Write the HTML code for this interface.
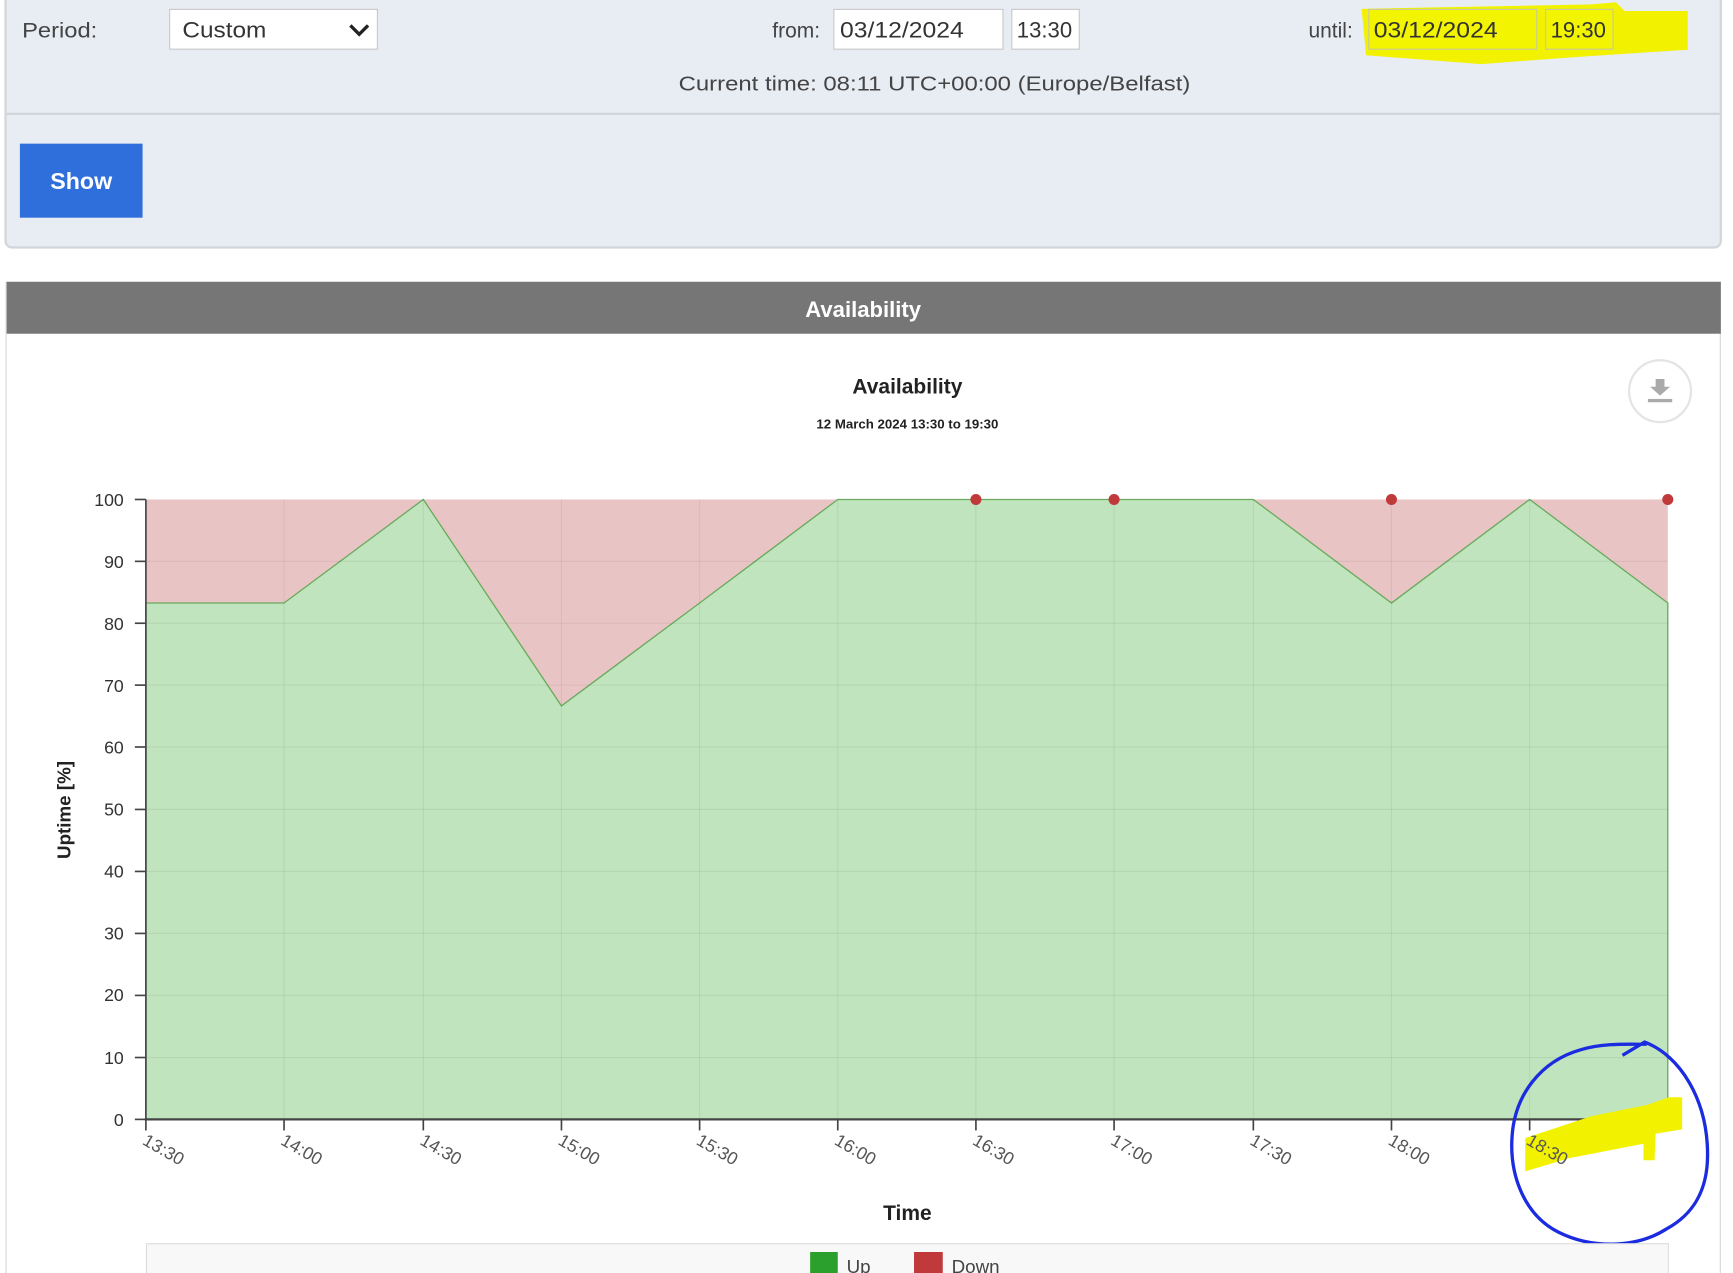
<!DOCTYPE html>
<html><head><meta charset="utf-8"><style>html,body{margin:0;padding:0;background:#fff;overflow:hidden}svg{display:block}text{font-family:"Liberation Sans",sans-serif}</style></head>
<body>
<svg width="1733" height="1273" viewBox="0 0 1568 1152" preserveAspectRatio="none" xmlns="http://www.w3.org/2000/svg">
<rect x="0" y="0" width="1568" height="1152" fill="#fff"/>
<rect x="5" y="-5" width="1552" height="229" rx="6" fill="#e8ecf3" stroke="#d2d5da" stroke-width="2"/>
<line x1="6" y1="103" x2="1556" y2="103" stroke="#d0d3d8" stroke-width="2"/>
<text x="20" y="34" font-size="19" fill="#444" textLength="68" lengthAdjust="spacingAndGlyphs">Period:</text>
<rect x="153.5" y="8.5" width="188" height="36" fill="#fff" stroke="#c8c8c8"/>
<text x="165" y="34" font-size="20" fill="#333" textLength="76" lengthAdjust="spacingAndGlyphs">Custom</text>
<path d="M317 23 L325 31 L333 23" fill="none" stroke="#222" stroke-width="3"/>
<text x="742" y="34" font-size="19" fill="#444" text-anchor="end">from:</text>
<rect x="754.5" y="8.5" width="153" height="36" fill="#fff" stroke="#c8c8c8"/>
<text x="760" y="34" font-size="20" fill="#333" textLength="112" lengthAdjust="spacingAndGlyphs">03/12/2024</text>
<rect x="915.5" y="8.5" width="61" height="36" fill="#fff" stroke="#c8c8c8"/>
<text x="920" y="34" font-size="20" fill="#333">13:30</text>
<text x="1224" y="34" font-size="19" fill="#444" text-anchor="end">until:</text>
<path d="M1232 8 L1440 4 L1462 2 L1470 10 L1527 10 L1527 45 L1420 52 L1340 58 L1236 50 Z" fill="#f2f200"/>
<rect x="1238.5" y="8.5" width="152" height="36" fill="#f3f500" stroke="#c8c8a0"/>
<text x="1243" y="34" font-size="20" fill="#333" textLength="112" lengthAdjust="spacingAndGlyphs">03/12/2024</text>
<rect x="1398.5" y="8.5" width="61" height="36" fill="#f3f500" stroke="#c8c8a0"/>
<text x="1403" y="34" font-size="20" fill="#333">19:30</text>
<text x="614" y="82" font-size="18" fill="#444" textLength="463" lengthAdjust="spacingAndGlyphs">Current time:  08:11 UTC+00:00 (Europe/Belfast)</text>
<rect x="18" y="130" width="111" height="67" fill="#2f6fdc"/>
<text x="73.5" y="171" font-size="21" font-weight="bold" fill="#fff" text-anchor="middle">Show</text>
<rect x="5.5" y="255.5" width="1551" height="900" fill="#fff" stroke="#d6d6d6"/>
<rect x="6" y="255" width="1551" height="47" fill="#767676"/>
<text x="781" y="287" font-size="20" font-weight="bold" fill="#fff" text-anchor="middle">Availability</text>
<text x="821" y="356" font-size="19" font-weight="bold" fill="#222" text-anchor="middle">Availability</text>
<text x="821" y="388" font-size="12" font-weight="bold" fill="#222" text-anchor="middle">12 March 2024 13:30 to 19:30</text>
<circle cx="1502" cy="354" r="28" fill="#fff" stroke="#e4e4e4" stroke-width="2"/>
<path d="M1498 343 h8 v7 h5 l-9 8 l-9 -8 h5 z" fill="#aaa"/>
<rect x="1491" y="361" width="22" height="3" fill="#aaa"/>
<rect x="132" y="452" width="1377" height="561" fill="#e9c4c5"/>
<polygon points="132,545.7 257,545.7 383,452 508,638.8 633,545.7 758,452 883,452 1008,452 1134,452 1259,545.7 1384,452 1509,545.7 1509,1013 132,1013" fill="#c0e4bd" stroke="#6aaa5e" stroke-width="1.2"/>
<g stroke="#000" stroke-opacity="0.06" stroke-width="1">
<line x1="257" y1="452" x2="257" y2="1013"/><line x1="383" y1="452" x2="383" y2="1013"/><line x1="508" y1="452" x2="508" y2="1013"/><line x1="633" y1="452" x2="633" y2="1013"/><line x1="758" y1="452" x2="758" y2="1013"/><line x1="883" y1="452" x2="883" y2="1013"/><line x1="1008" y1="452" x2="1008" y2="1013"/><line x1="1134" y1="452" x2="1134" y2="1013"/><line x1="1259" y1="452" x2="1259" y2="1013"/><line x1="1384" y1="452" x2="1384" y2="1013"/>
<line x1="132" y1="508" x2="1509" y2="508"/><line x1="132" y1="564" x2="1509" y2="564"/><line x1="132" y1="620" x2="1509" y2="620"/><line x1="132" y1="676" x2="1509" y2="676"/><line x1="132" y1="732.5" x2="1509" y2="732.5"/><line x1="132" y1="788.6" x2="1509" y2="788.6"/><line x1="132" y1="844.7" x2="1509" y2="844.7"/><line x1="132" y1="900.8" x2="1509" y2="900.8"/><line x1="132" y1="957" x2="1509" y2="957"/>
</g>
<line x1="132" y1="452" x2="132" y2="1014" stroke="#444" stroke-width="1.5"/>
<line x1="131" y1="1013" x2="1510" y2="1013" stroke="#444" stroke-width="2"/>
<g stroke="#444" stroke-width="1.5">
<line x1="122" y1="452" x2="132" y2="452"/><line x1="122" y1="508" x2="132" y2="508"/><line x1="122" y1="564" x2="132" y2="564"/><line x1="122" y1="620" x2="132" y2="620"/><line x1="122" y1="676" x2="132" y2="676"/><line x1="122" y1="732.5" x2="132" y2="732.5"/><line x1="122" y1="788.6" x2="132" y2="788.6"/><line x1="122" y1="844.7" x2="132" y2="844.7"/><line x1="122" y1="900.8" x2="132" y2="900.8"/><line x1="122" y1="957" x2="132" y2="957"/><line x1="122" y1="1013" x2="132" y2="1013"/>
<line x1="132" y1="1013" x2="132" y2="1023"/><line x1="257" y1="1013" x2="257" y2="1023"/><line x1="383" y1="1013" x2="383" y2="1023"/><line x1="508" y1="1013" x2="508" y2="1023"/><line x1="633" y1="1013" x2="633" y2="1023"/><line x1="758" y1="1013" x2="758" y2="1023"/><line x1="883" y1="1013" x2="883" y2="1023"/><line x1="1008" y1="1013" x2="1008" y2="1023"/><line x1="1134" y1="1013" x2="1134" y2="1023"/><line x1="1259" y1="1013" x2="1259" y2="1023"/><line x1="1384" y1="1013" x2="1384" y2="1023"/><line x1="1509" y1="1013" x2="1509" y2="1023"/>
</g>
<g font-size="16" fill="#333" text-anchor="end">
<text x="112" y="458">100</text><text x="112" y="514">90</text><text x="112" y="570">80</text><text x="112" y="626">70</text><text x="112" y="682">60</text><text x="112" y="738">50</text><text x="112" y="794">40</text><text x="112" y="850">30</text><text x="112" y="906">20</text><text x="112" y="963">10</text><text x="112" y="1019">0</text>
</g>
<g fill="#c0393b"><circle cx="883" cy="452" r="5"/><circle cx="1008" cy="452" r="5"/><circle cx="1259" cy="452" r="5"/><circle cx="1509" cy="452" r="5"/></g>
<text transform="translate(64,733) rotate(-90)" font-size="17" font-weight="bold" fill="#222" text-anchor="middle">Uptime [%]</text>
<path d="M1380 1030 L1440 1010 L1490 1000 L1510 993 L1522 993 L1522 1022 L1498 1026 L1497 1050 L1487 1050 L1487 1035 L1420 1048 L1380 1060 Z" fill="#f2f200"/>
<g font-size="16" fill="#555">
<text transform="translate(128,1035) rotate(30)">13:30</text><text transform="translate(253,1035) rotate(30)">14:00</text><text transform="translate(379,1035) rotate(30)">14:30</text><text transform="translate(504,1035) rotate(30)">15:00</text><text transform="translate(629,1035) rotate(30)">15:30</text><text transform="translate(754,1035) rotate(30)">16:00</text><text transform="translate(879,1035) rotate(30)">16:30</text><text transform="translate(1004,1035) rotate(30)">17:00</text><text transform="translate(1130,1035) rotate(30)">17:30</text><text transform="translate(1255,1035) rotate(30)">18:00</text><text transform="translate(1380,1035) rotate(30)">18:30</text>
</g>
<text x="821" y="1104" font-size="19" font-weight="bold" fill="#222" text-anchor="middle">Time</text>
<path d="M1468 955 L1488 943 C1520 955 1545 995 1545 1045 C1545 1080 1530 1100 1508 1112 C1480 1130 1440 1130 1410 1115 C1380 1100 1366 1065 1368 1030 C1370 990 1395 960 1430 950 C1450 944 1470 945 1490 945" fill="none" stroke="#1b2be0" stroke-width="3"/>
<rect x="132.5" y="1125.5" width="1377" height="40" fill="#f8f8f8" stroke="#dcdcdc"/>
<rect x="733" y="1133" width="25" height="20" fill="#2ca02c"/>
<text x="766" y="1152" font-size="17" fill="#444">Up</text>
<rect x="827" y="1133" width="26" height="20" fill="#c0393b"/>
<text x="861" y="1152" font-size="17" fill="#444">Down</text>
</svg>
</body></html>
